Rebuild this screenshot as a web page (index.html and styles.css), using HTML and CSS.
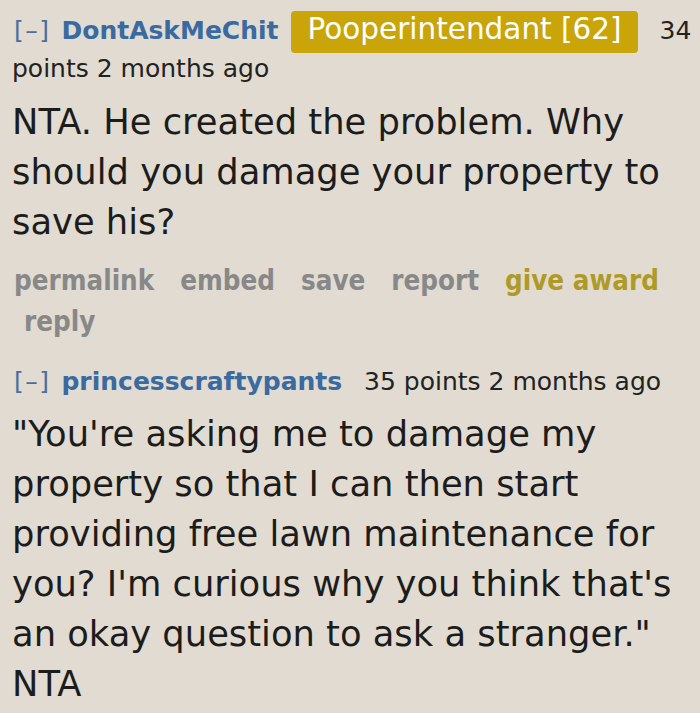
FILE: index.html
```html
<!DOCTYPE html>
<html lang="en">
<head>
<meta charset="utf-8">
<title>Comments</title>
<link rel="stylesheet" href="styles.css">
</head>
<body>
<div class="comments">
  <div class="comment">
    <p class="tagline"><a class="expand">[–]</a> <a class="author">DontAskMeChit</a> <span class="flair">Pooperintendant [62]</span> <span class="score">34 points</span> <time class="live">2 months ago</time></p>
    <div class="md">
      <p>NTA. He created the problem. Why should you damage your property to save his?</p>
    </div>
    <ul class="buttons">
      <li><a>permalink</a></li>
      <li><a>embed</a></li>
      <li><a>save</a></li>
      <li><a>report</a></li>
      <li><a class="gold">give award</a></li>
      <li><a>reply</a></li>
    </ul>
  </div>
  <div class="comment">
    <p class="tagline"><a class="expand">[–]</a> <a class="author">princesscraftypants</a> <span class="score">35 points</span> <time class="live">2 months ago</time></p>
    <div class="md">
      <p>"You're asking me to damage my property so that I can then start providing free lawn maintenance for you? I'm curious why you think that's an okay question to ask a stranger."<br>NTA</p>
    </div>
  </div>
</div>
</body>
</html>
```

FILE: styles.css
```css
html, body {
  margin: 0;
  padding: 0;
  background: #e1dbd1;
}

body {
  font-family: "DejaVu Sans", Verdana, sans-serif;
  color: #1c1c1c;
}

.comments {
  padding: 10px 0 0 12px;
}

.tagline {
  margin: 0;
  font-size: 25px;
  line-height: 38px;
  color: #222;
}

.expand {
  color: #4a6f9c;
  margin-left: 2px;
  margin-right: 3px;
  letter-spacing: 1.5px;
}

.author {
  color: #3a6aa0;
  font-weight: bold;
}

.flair {
  margin-left: 5px;
  font-size: 29.5px;
  padding: 1px 16px 7px;
  background: #c9a50a;
  color: #fff;
  border-radius: 4px;
}

.score {
  margin-left: 14px;
}

.md p {
  margin: 8.5px 0 0;
  font-size: 35.3px;
  line-height: 50px;
}

.buttons {
  list-style: none;
  margin: 13.5px 0 0;
  padding: 0 0 0 2px;
  display: flex;
  flex-wrap: wrap;
  font-family: "DejaVu Sans Condensed", "DejaVu Sans", sans-serif;
  font-stretch: condensed;
  font-weight: bold;
  font-size: 27.5px;
  line-height: 41px;
}

.buttons li {
  padding: 0 16px 0 10px;
}

.buttons li:first-child {
  padding-left: 0;
}

.buttons a {
  color: #888;
}

.buttons a.gold {
  color: #b09a27;
}

.comment + .comment {
  margin-top: 20.5px;
}
```
